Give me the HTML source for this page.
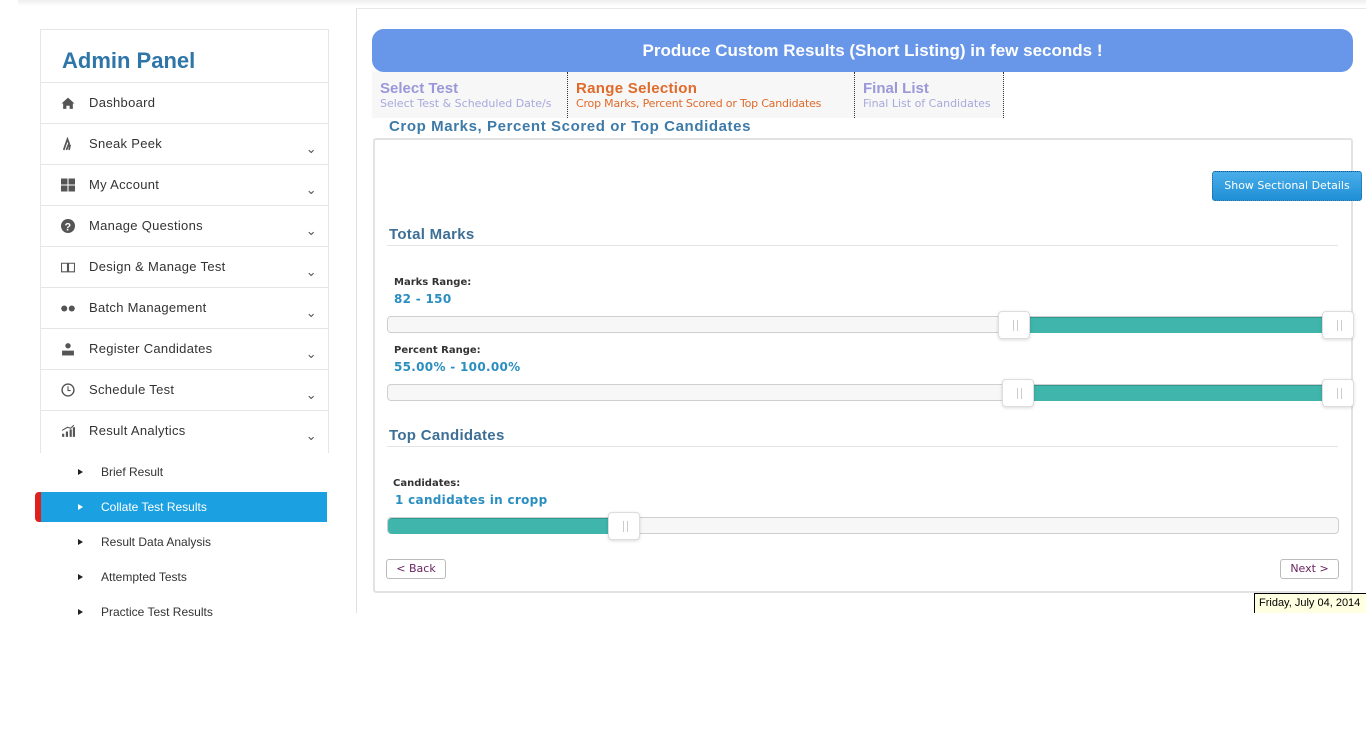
<!DOCTYPE html>
<html><head><style>
*{margin:0;padding:0;box-sizing:border-box}
body{width:1366px;height:747px;background:#fff;font-family:"Liberation Sans",sans-serif;position:relative;overflow:hidden}
.a{position:absolute}
.side{left:40px;top:29px;width:289px;height:424px;border:1px solid #e6e6e6;border-bottom:none}
.side h1{font-size:22px;color:#2e75a8;font-weight:bold;padding:18px 0 0 21px;height:53px;border-bottom:1px solid #e6e6e6}
.row{height:41px;border-bottom:1px solid #e6e6e6;position:relative;font-size:13px;color:#333;line-height:40px;padding-left:48px;letter-spacing:.3px}
.row .ic{position:absolute;left:20px;top:13px;width:14px;height:14px;color:#555}
.row .ch{position:absolute;right:11px;top:5px;font-size:13px;color:#555}
.sub{font-size:12px;color:#333;left:35px;width:292px;height:30px;line-height:30px;padding-left:66px}
.sub:before{content:"";position:absolute;left:43px;top:12px;border-left:5px solid #222;border-top:3px solid transparent;border-bottom:3px solid transparent}
.sub.act{background:#1ba1e2;color:#fff;border-left:6px solid #e0201c;border-radius:4px 0 0 4px;padding-left:60px}
.sub.act:before{border-left-color:#fff;left:37px}
.track{height:17px;border:1px solid #cfcfcf;border-radius:4px;background:#f7f7f7}
.fill{background:#40b5ac;height:16px;border-top:1px solid #2f9990}
.h{width:32px;height:28px;background:#fff;border:1px solid #ddd;border-radius:4px;box-shadow:0 1px 3px rgba(0,0,0,.15)}
.h:after{content:"";position:absolute;left:14px;top:8px;width:3px;height:11px;border-left:1px solid #ccc;border-right:1px solid #ccc}
.dv{font-family:"DejaVu Sans",sans-serif}
.lbl{font-size:10px;font-weight:bold;color:#333;font-family:"DejaVu Sans",sans-serif}
.val{font-size:12px;font-weight:bold;color:#2a8fc0;letter-spacing:.3px;font-family:"DejaVu Sans",sans-serif}
.sec{font-size:15px;font-weight:bold;color:#3d6f96;letter-spacing:.3px}
.btn{height:20px;border:1px solid #bbb;border-radius:3px;font-size:11px;color:#6a2460;text-align:center;line-height:18px;background:#fff;font-family:"DejaVu Sans",sans-serif}
</style></head><body>
<div class="a" style="left:18px;top:0;width:1348px;height:6px;background:linear-gradient(#eee,#fff)"></div>
<div class="a" style="left:356px;top:8px;width:1010px;height:1px;background:#e8e8e8"></div>
<div class="a" style="left:356px;top:8px;width:1px;height:605px;background:#e0e0e0"></div>

<div class="a side">
<h1>Admin Panel</h1>
<div class="row"><svg class="ic" viewBox="0 0 13 13"><path d="M0.5 7L6.5 1.5 12.5 7H11V12H8V9H5V12H2V7Z" fill="#555"/></svg>Dashboard</div>
<div class="row"><svg class="ic" viewBox="0 0 13 13"><path d="M2.5 12L6 2 7.5 6 5 12M7.5 12L8.5 7" stroke="#555" stroke-width="1.6" fill="none"/></svg>Sneak Peek<span class="ch">⌄</span></div>
<div class="row"><svg class="ic" viewBox="0 0 13 13"><path d="M0 0.5H6V6H0ZM7 0.5H13V6H7ZM0 7H6V12.5H0ZM7 7H13V12.5H7Z" fill="#555"/></svg>My Account<span class="ch">⌄</span></div>
<div class="row"><svg class="ic" viewBox="0 0 13 13"><circle cx="6.5" cy="6.5" r="6.5" fill="#555"/><text x="6.5" y="10.5" font-size="10" font-weight="bold" fill="#fff" text-anchor="middle" font-family="Liberation Sans">?</text></svg>Manage Questions<span class="ch">⌄</span></div>
<div class="row"><svg class="ic" viewBox="0 0 13 13"><path d="M0.5 3H6V11H0.5ZM7 3H12.5V11H7Z" stroke="#555" fill="none"/></svg>Design &amp; Manage Test<span class="ch">⌄</span></div>
<div class="row"><svg class="ic" viewBox="0 0 13 13"><circle cx="3" cy="7" r="2.8" fill="#555"/><circle cx="10" cy="7" r="2.8" fill="#555"/></svg>Batch Management<span class="ch">⌄</span></div>
<div class="row"><svg class="ic" viewBox="0 0 13 13"><circle cx="6.5" cy="3.5" r="2.5" fill="#555"/><path d="M1 12.5V8H12V12.5Z" fill="#555"/></svg>Register Candidates<span class="ch">⌄</span></div>
<div class="row"><svg class="ic" viewBox="0 0 13 13"><circle cx="6.5" cy="6.5" r="5.5" stroke="#555" fill="none" stroke-width="1.3"/><path d="M6.5 3V7H9" stroke="#555" fill="none"/></svg>Schedule Test<span class="ch">⌄</span></div>
<div class="row" style="border-bottom:none"><svg class="ic" viewBox="0 0 13 13"><path d="M1 12V9H3V12ZM4.5 12V7H6.5V12ZM8 12V5H10V12ZM11 12V3H13V12Z" fill="#555"/><path d="M1 6L6 3 9 4 12 1" stroke="#555" fill="none"/></svg>Result Analytics<span class="ch">⌄</span></div>
</div>
<div class="a sub" style="top:457px">Brief Result</div>
<div class="a sub act" style="top:492px">Collate Test Results</div>
<div class="a sub" style="top:527px">Result Data Analysis</div>
<div class="a sub" style="top:562px">Attempted Tests</div>
<div class="a sub" style="top:597px;height:20px;line-height:30px">Practice Test Results</div>

<div class="a" style="left:372px;top:29px;width:981px;height:43px;background:#6896e8;border-radius:12px;color:#fff;font-size:17px;font-weight:bold;text-align:center;line-height:43px;padding-left:ppx;padding-left:20px">Produce Custom Results (Short Listing) in few seconds !</div>
<div class="a" style="left:372px;top:72px;width:632px;height:46px;background:#f7f7f7"></div>
<div class="a" style="left:567px;top:72px;height:46px;border-left:1px dotted #333"></div>
<div class="a" style="left:854px;top:72px;height:46px;border-left:1px dotted #333"></div>
<div class="a" style="left:1003px;top:72px;height:46px;border-left:1px dotted #333"></div>
<div class="a" style="left:380px;top:80px;color:#9a98d8;font-size:15px;font-weight:bold">Select Test</div>
<div class="a dv" style="left:380px;top:97px;color:#a9a8dc;font-size:11px">Select Test &amp; Scheduled Date/s</div>
<div class="a" style="left:576px;top:80px;color:#e06a2a;font-size:15px;font-weight:bold;letter-spacing:.3px">Range Selection</div>
<div class="a dv" style="left:576px;top:97px;color:#e06a2a;font-size:11px;letter-spacing:-.2px">Crop Marks, Percent Scored or Top Candidates</div>
<div class="a" style="left:863px;top:80px;color:#9a98d8;font-size:15px;font-weight:bold">Final List</div>
<div class="a dv" style="left:863px;top:97px;color:#a9a8dc;font-size:11px">Final List of Candidates</div>

<div class="a" style="left:373px;top:138px;width:980px;height:455px;border:2px solid #e2e2e2;border-radius:3px"></div>
<div class="a" style="left:384px;top:118px;background:#fff;padding:0 5px;color:#3d7aa8;font-size:15px;font-weight:bold;letter-spacing:.6px">Crop Marks, Percent Scored or Top Candidates</div>
<div class="a dv" style="left:1212px;top:171px;width:150px;height:30px;background:linear-gradient(#4aaeea,#1f8fd6);border:1px dotted #1a5f90;border-radius:3px;color:#fff;font-size:11px;text-align:center;line-height:28px">Show Sectional Details</div>

<div class="a sec" style="left:389px;top:226px">Total Marks</div>
<div class="a" style="left:387px;top:245px;width:951px;height:1px;background:#e4e4e4"></div>
<div class="a lbl" style="left:394px;top:277px">Marks Range:</div>
<div class="a val" style="left:394px;top:292px">82 - 150</div>
<div class="a track" style="left:387px;top:316px;width:967px"></div>
<div class="a fill" style="left:1030px;top:317px;width:292px"></div>
<div class="a h" style="left:998px;top:311px"></div>
<div class="a h" style="left:1322px;top:311px"></div>

<div class="a lbl" style="left:394px;top:345px">Percent Range:</div>
<div class="a val" style="left:394px;top:360px">55.00% - 100.00%</div>
<div class="a track" style="left:387px;top:384px;width:967px"></div>
<div class="a fill" style="left:1034px;top:385px;width:288px"></div>
<div class="a h" style="left:1002px;top:379px"></div>
<div class="a h" style="left:1322px;top:379px"></div>

<div class="a sec" style="left:389px;top:427px">Top Candidates</div>
<div class="a" style="left:387px;top:446px;width:951px;height:1px;background:#e4e4e4"></div>
<div class="a lbl" style="left:393px;top:478px">Candidates:</div>
<div class="a val" style="left:395px;top:493px">1 candidates in cropp</div>
<div class="a track" style="left:387px;top:517px;width:952px"></div>
<div class="a fill" style="left:388px;top:518px;width:222px;border-radius:4px 0 0 4px"></div>
<div class="a h" style="left:608px;top:512px"></div>

<div class="a btn" style="left:386px;top:559px;width:60px">&lt; Back</div>
<div class="a btn" style="left:1280px;top:559px;width:59px">Next &gt;</div>
<div class="a" style="left:1254px;top:593px;width:112px;height:20px;background:#ffffe1;border-left:1px solid #000;border-top:1px solid #000;font-size:11px;line-height:18px;padding-left:4px;color:#000">Friday, July 04, 2014</div>
</body></html>
